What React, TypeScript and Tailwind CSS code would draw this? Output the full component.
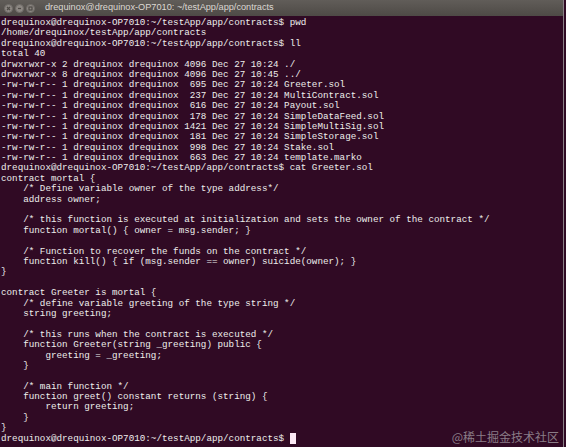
import React from 'react';

const PROMPT = 'drequinox@drequinox-OP7010:~/testApp/app/contracts$';

const lines: string[] = [
  `${PROMPT} pwd`,
  '/home/drequinox/testApp/app/contracts',
  `${PROMPT} ll`,
  'total 40',
  'drwxrwxr-x 2 drequinox drequinox 4096 Dec 27 10:24 ./',
  'drwxrwxr-x 8 drequinox drequinox 4096 Dec 27 10:45 ../',
  '-rw-rw-r-- 1 drequinox drequinox  695 Dec 27 10:24 Greeter.sol',
  '-rw-rw-r-- 1 drequinox drequinox  237 Dec 27 10:24 MultiContract.sol',
  '-rw-rw-r-- 1 drequinox drequinox  616 Dec 27 10:24 Payout.sol',
  '-rw-rw-r-- 1 drequinox drequinox  178 Dec 27 10:24 SimpleDataFeed.sol',
  '-rw-rw-r-- 1 drequinox drequinox 1421 Dec 27 10:24 SimpleMultiSig.sol',
  '-rw-rw-r-- 1 drequinox drequinox  181 Dec 27 10:24 SimpleStorage.sol',
  '-rw-rw-r-- 1 drequinox drequinox  998 Dec 27 10:24 Stake.sol',
  '-rw-rw-r-- 1 drequinox drequinox  663 Dec 27 10:24 template.marko',
  `${PROMPT} cat Greeter.sol`,
  'contract mortal {',
  '    /* Define variable owner of the type address*/',
  '    address owner;',
  '',
  '    /* this function is executed at initialization and sets the owner of the contract */',
  '    function mortal() { owner = msg.sender; }',
  '',
  '    /* Function to recover the funds on the contract */',
  '    function kill() { if (msg.sender == owner) suicide(owner); }',
  '}',
  '',
  'contract Greeter is mortal {',
  '    /* define variable greeting of the type string */',
  '    string greeting;',
  '',
  '    /* this runs when the contract is executed */',
  '    function Greeter(string _greeting) public {',
  '        greeting = _greeting;',
  '    }',
  '',
  '    /* main function */',
  '    function greet() constant returns (string) {',
  '        return greeting;',
  '    }',
  '}',
];

function WinButton({ kind }: { kind: 'close' | 'min' | 'max' }) {
  return (
    <div className="grid h-[9px] w-[9px] place-items-center rounded-full bg-[#8c8782] border border-[#6f6b67]">
      <svg width="7" height="7" viewBox="0 0 7 7" fill="none" stroke="#4e4a46" strokeWidth="1.2">
        {kind === 'close' && <path d="M2 2l3 3M5 2l-3 3" />}
        {kind === 'min' && <path d="M2 3.5h3" />}
        {kind === 'max' && <rect x="2" y="2" width="3" height="3" />}
      </svg>
    </div>
  );
}

export default function App() {
  return (
    <div className="relative h-[447px] w-[566px] overflow-hidden bg-[#300a24]">
      <div className="flex h-full w-[564px] flex-col border-r border-[#8a7f86]">
        {/* Title bar */}
        <div className="flex h-[16px] shrink-0 items-center bg-gradient-to-b from-[#615d59] to-[#4e4a46] pl-[4px]">
          <div className="flex items-center gap-[2px]">
            <WinButton kind="close" />
            <WinButton kind="min" />
            <WinButton kind="max" />
          </div>
          <span
            className="ml-[10px] whitespace-pre text-[9.2px] leading-none text-[#dcd8d2]"
            style={{ fontFamily: '"Liberation Sans", sans-serif' }}
          >
            drequinox@drequinox-OP7010: ~/testApp/app/contracts
          </span>
        </div>

        {/* Terminal body */}
        <div
          className="flex-1 pl-[1px] pt-[2px] text-[9.25px] leading-[10.4px] text-[#eeeeec]"
          style={{ fontFamily: '"Liberation Mono", monospace' }}
        >
          {lines.map((l, i) => (
            <div key={i} className="h-[10.4px] whitespace-pre">
              {l}
            </div>
          ))}
          <div className="flex h-[10.4px] items-center whitespace-pre">
            {PROMPT + ' '}
            <span className="inline-block h-[11px] w-[6px] bg-[#fbe8f4]" />
          </div>
        </div>
      </div>

      {/* Watermark */}
      <div
        className="absolute bottom-[4px] right-[7px] text-[12px] leading-none text-[#8a7d87]"
        style={{ fontFamily: '"Noto Sans CJK SC", sans-serif' }}
      >
        @稀土掘金技术社区
      </div>
    </div>
  );
}
